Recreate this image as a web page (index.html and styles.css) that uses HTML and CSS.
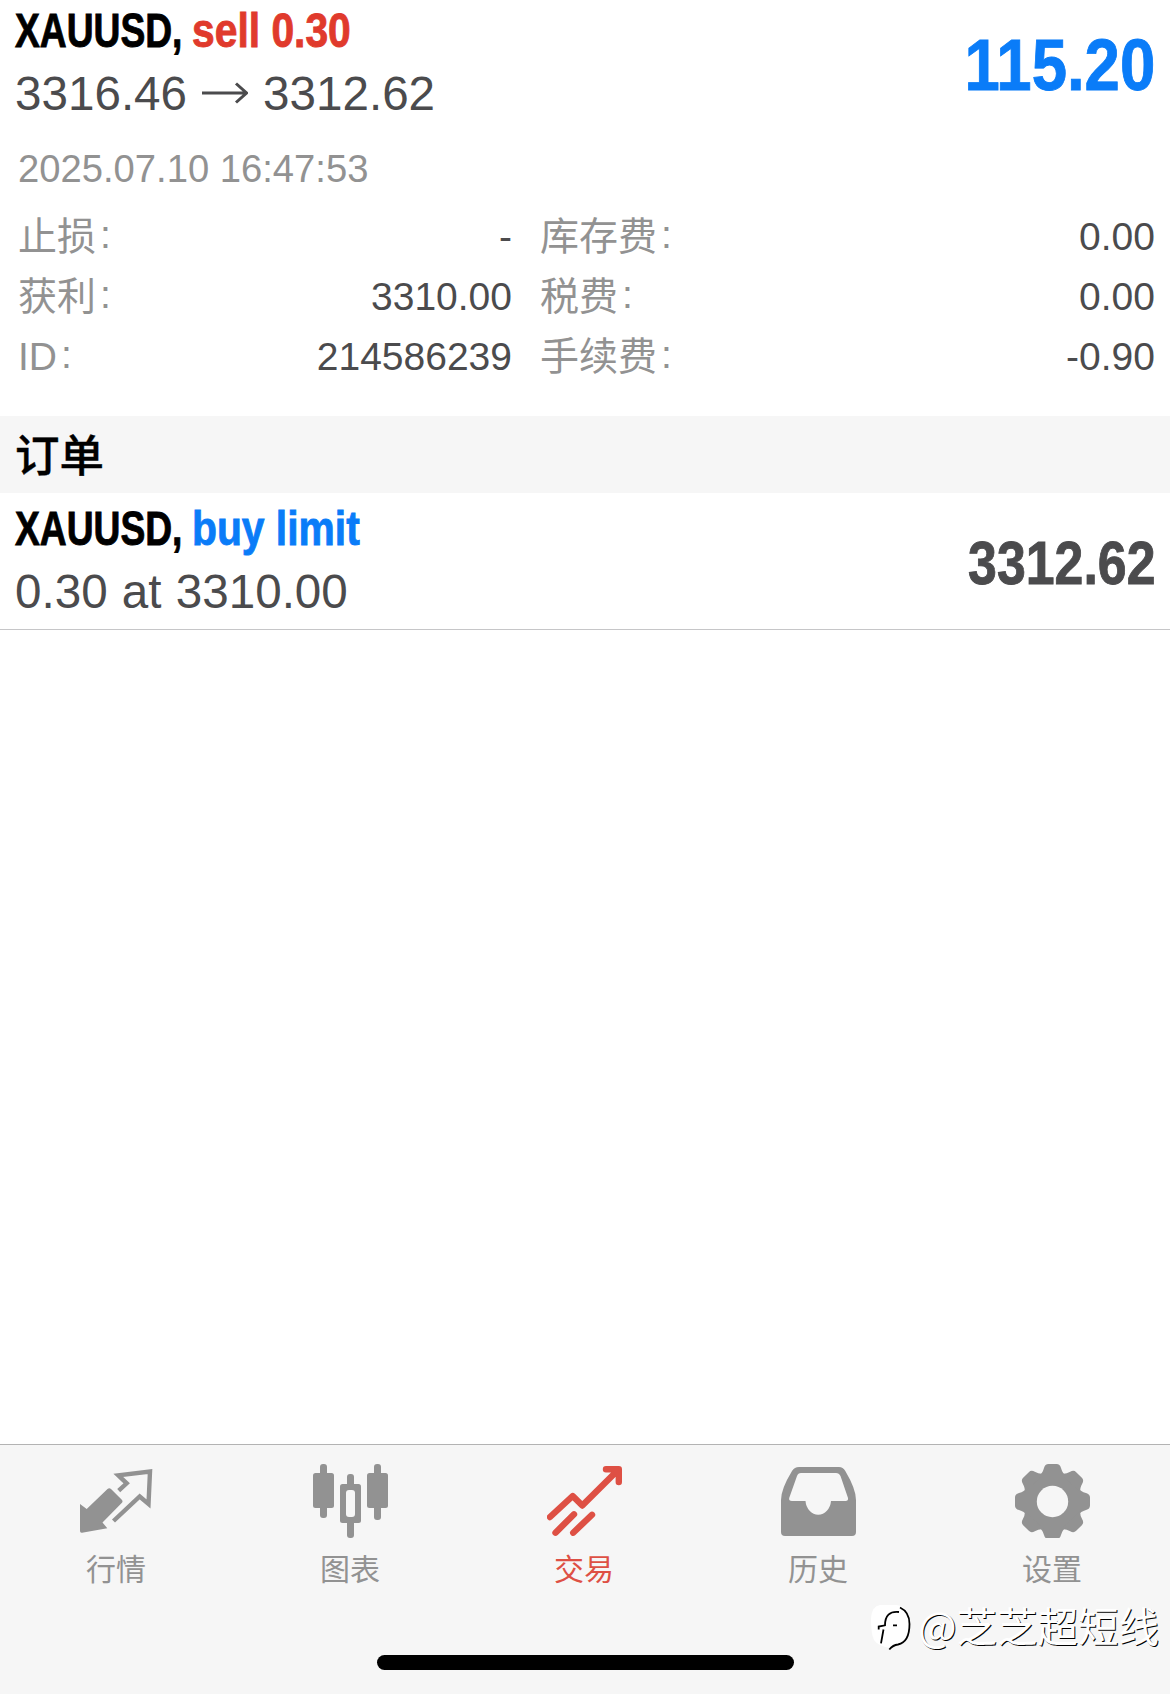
FILE: index.html
```html
<!DOCTYPE html>
<html lang="zh-CN">
<head>
    <meta charset="UTF-8">
    <meta name="viewport" content="width=device-width, initial-scale=1.0">
    <title>交易</title>
    <link rel="stylesheet" href="styles.css">
</head>
<body>
    <main class="content">
        <!-- Open position -->
        <section class="position">
            <div class="row">
                <div class="summary">
                    <div class="symbol"><span class="name">XAUUSD,</span><span class="side sell">sell 0.30</span></div>
                    <div class="price">
                        <span>3316.46</span>
                        <svg class="arrow" viewBox="0 0 46 22"><path d="M0 11H44M34 1.5L44.5 11L34 20.5"/></svg>
                        <span>3312.62</span>
                    </div>
                </div>
                <div class="profit">115.20</div>
            </div>
            <div class="date">2025.07.10 16:47:53</div>
            <div class="details">
                <span class="label">止损<i>:</i></span><span class="value">-</span>
                <span class="label">库存费<i>:</i></span><span class="value">0.00</span>
                <span class="label">获利<i>:</i></span><span class="value">3310.00</span>
                <span class="label">税费<i>:</i></span><span class="value">0.00</span>
                <span class="label">ID<i>:</i></span><span class="value">214586239</span>
                <span class="label">手续费<i>:</i></span><span class="value">-0.90</span>
            </div>
        </section>

        <!-- Pending orders -->
        <h2 class="section-title">订单</h2>
        <section class="order row">
            <div class="summary">
                <div class="symbol"><span class="name">XAUUSD,</span><span class="side buy">buy limit</span></div>
                <div class="price">0.30 at 3310.00</div>
            </div>
            <div class="current">3312.62</div>
        </section>
    </main>

    <footer class="bottom">
        <nav class="tabs">
            <a class="tab">
                <svg class="icon" viewBox="0 0 76 76">
                    <path fill="currentColor" d="M1 42L7.7 47L28.5 27Q30.3 25.3 32 27L42.8 37.8Q44.3 39.5 42.7 41L23.5 60.5L28.3 66.3L3 70.7Q1 71 1 69Z"/>
                    <path class="line thin" d="M39.7 28.7L47.7 21.3L39.3 13.3L71 9.6L69.5 42L60.7 34.5L34.5 59"/>
                </svg>
                <span>行情</span>
            </a>
            <a class="tab">
                <svg class="icon" viewBox="0 0 76 76" fill="currentColor">
                    <rect x="7" y="2" width="7" height="54" rx="3"/>
                    <rect x="0" y="11" width="21" height="35" rx="2.5"/>
                    <rect x="61" y="2" width="7" height="56" rx="3"/>
                    <rect x="54" y="11" width="21" height="35" rx="2.5"/>
                    <rect x="34" y="12" width="7" height="64" rx="3"/>
                    <rect x="27" y="22" width="21" height="39" rx="2.5"/>
                    <rect class="hole" x="33" y="28" width="9" height="27" rx="3"/>
                </svg>
                <span>图表</span>
            </a>
            <a class="tab active">
                <svg class="icon" viewBox="0 0 76 76">
                    <path class="line" d="M3 55L25.7 34L35.3 43.5L70 9M59 7.2H71.8V20"/>
                    <path class="line" d="M8.5 70.7L27 52.3M26.2 70.7L45 52.8"/>
                </svg>
                <span>交易</span>
            </a>
            <a class="tab">
                <svg class="icon" viewBox="0 0 76 76">
                    <path fill="currentColor" d="M18 5H58Q62 5 64.3 9Q75 27 75 38V70Q75 74 71 74H4Q0 74 0 70V38Q0 27 11 9Q13.5 5 18 5Z"/>
                    <path class="hole" d="M20 11H55Q58 11 59.5 14L67 36Q67.5 39 64.5 39H50A12.8 15 0 0 1 24.5 39H11Q7.5 39 8.2 36L16 14Q17 11 20 11Z"/>
                </svg>
                <span>历史</span>
            </a>
            <a class="tab">
                <svg class="icon" viewBox="0 0 76 76" fill="currentColor">
                    <defs>
                        <path id="tooth" d="M24 13.500Q27.500 11.500 29 6Q30 2 33.500 2H41.500Q45 2 46 6Q47.500 11.500 51 13.500Z"/>
                    </defs>
                    <circle cx="37.5" cy="39.5" r="29.3"/>
                    <use href="#tooth"/>
                    <use href="#tooth" transform="rotate(45 37.5 39.5)"/>
                    <use href="#tooth" transform="rotate(90 37.5 39.5)"/>
                    <use href="#tooth" transform="rotate(135 37.5 39.5)"/>
                    <use href="#tooth" transform="rotate(180 37.5 39.5)"/>
                    <use href="#tooth" transform="rotate(225 37.5 39.5)"/>
                    <use href="#tooth" transform="rotate(270 37.5 39.5)"/>
                    <use href="#tooth" transform="rotate(315 37.5 39.5)"/>
                    <circle class="hole" cx="37.5" cy="39.5" r="15.7"/>
                </svg>
                <span>设置</span>
            </a>
        </nav>
        <div class="home-bar"></div>
    </footer>

    <div class="watermark">
        <svg class="mark" viewBox="0 0 44 50">
            <path fill="#fff" d="M10 1H26Q39 2 39 17V24Q39 38 26 41L20 44Q8 42 4 36Q1 30 1 14Q2 2 10 1Z"/>
            <path class="ink" d="M30 3.5Q39.5 8 39.5 20Q39.5 38 28 40.5Q23 41 19.3 45.5"/>
            <path class="ink" d="M29 8Q15 6.5 15 21.3L8.7 22.5V25.5M13.5 25.5L11 39.3M23 21.3H27"/>
        </svg>
        <span>@芝芝超短线</span>
    </div>
</body>
</html>
```

FILE: styles.css
```css
:root {
    --blue: #0a7cf8;
    --red: #e03a2c;
    --text: #4b4b4d;
    --muted: #929292;
    --bar: #f6f6f6;
}

* {
    margin: 0;
    padding: 0;
    box-sizing: border-box;
}

body {
    position: relative;
    display: flex;
    flex-direction: column;
    height: 1694px;
    overflow: hidden;
    background: #fff;
    color: var(--text);
    font-family: "Liberation Sans", "Noto Sans CJK SC", sans-serif;
}

.content {
    flex: 1;
}

.position {
    height: 416px;
}

.row {
    display: flex;
    justify-content: space-between;
    padding: 0 15px;
}

.symbol {
    display: flex;
    height: 62px;
    line-height: 62px;
    color: #000;
    font-size: 48px;
    font-weight: bold;
    white-space: nowrap;
    -webkit-text-stroke: 0.9px;
}

/* condensed bold */
.name {
    width: 177px;
    transform: scaleX(0.775);
    transform-origin: left;
}

.side {
    transform: scaleX(0.85);
    transform-origin: left;
}

.sell {
    color: var(--red);
}

.buy {
    color: var(--blue);
}

.price {
    display: flex;
    align-items: center;
    height: 62px;
    font-size: 47.6px;
    white-space: pre;
}

.arrow {
    width: 46px;
    height: 22px;
    margin: 0 15px;
    fill: none;
    stroke: currentColor;
    stroke-width: 3;
}

.profit,
.current {
    font-weight: bold;
    transform-origin: right;
    -webkit-text-stroke: 0.9px;
}

.profit {
    color: var(--blue);
    font-size: 73px;
    line-height: 130px;
    transform: scaleX(0.87);
}

.current {
    font-size: 61px;
    line-height: 130px;
    transform: scaleX(0.85);
}

.date {
    padding-left: 18px;
    height: 77px;
    line-height: 77px;
    color: var(--muted);
    font-size: 38.2px;
}

.details {
    display: grid;
    grid-template-columns: 200px 294px 200px 1fr;
    grid-auto-rows: 60px;
    padding: 0 15px 0 18px;
    font-size: 39px;
    line-height: 60px;
}

.label {
    color: var(--muted);
}

.label:nth-child(4n + 3) {
    padding-left: 28px;
}

.label i {
    margin-left: 4px;
    font-style: normal;
    line-height: 0;
    vertical-align: 2px;
}

.value {
    text-align: right;
}

.section-title {
    height: 77px;
    padding-left: 15px;
    background: var(--bar);
    color: #000;
    font-size: 44.5px;
    font-weight: 500;
    line-height: 81px;
    -webkit-text-stroke: 0.4px;
}

.order {
    height: 137px;
    padding-top: 5px;
    border-bottom: 1px solid #c6c6c8;
}

.order .price {
    word-spacing: 1px;
}

.bottom {
    height: 250px;
    border-top: 1px solid #b3b3b3;
    background: var(--bar);
}

.tabs {
    display: grid;
    grid-template-columns: repeat(5, 1fr);
    height: 210px;
    padding-top: 17px;
}

.tab {
    display: flex;
    flex-direction: column;
    align-items: center;
    color: var(--muted);
    font-size: 30px;
    line-height: 44px;
}

.tab span {
    margin-right: 2px;
}

.active {
    color: #de5044;
}

.icon {
    width: 76px;
    height: 76px;
    margin-bottom: 10px;
}

.line {
    fill: none;
    stroke: currentColor;
    stroke-width: 6.4;
    stroke-linecap: round;
    stroke-linejoin: round;
}

.thin {
    stroke-width: 4.4;
    stroke-linecap: butt;
    stroke-linejoin: miter;
}

.hole {
    fill: var(--bar);
}

.home-bar {
    width: 417px;
    height: 15px;
    margin: 0 auto;
    border-radius: 8px;
    background: #000;
}

/* Author mark over the tab bar */
.watermark {
    position: absolute;
    right: 11px;
    bottom: 39px;
    display: flex;
    align-items: center;
    color: #fff;
    font-family: "Noto Sans CJK SC", sans-serif;
    font-size: 40.5px;
    line-height: 60px;
    text-shadow: 1px 1px 0 #000;
}

.mark {
    width: 44px;
    height: 50px;
    margin: 8px 4px 0 0;
}

.ink {
    fill: none;
    stroke: #000;
    stroke-width: 1.8;
}
```
